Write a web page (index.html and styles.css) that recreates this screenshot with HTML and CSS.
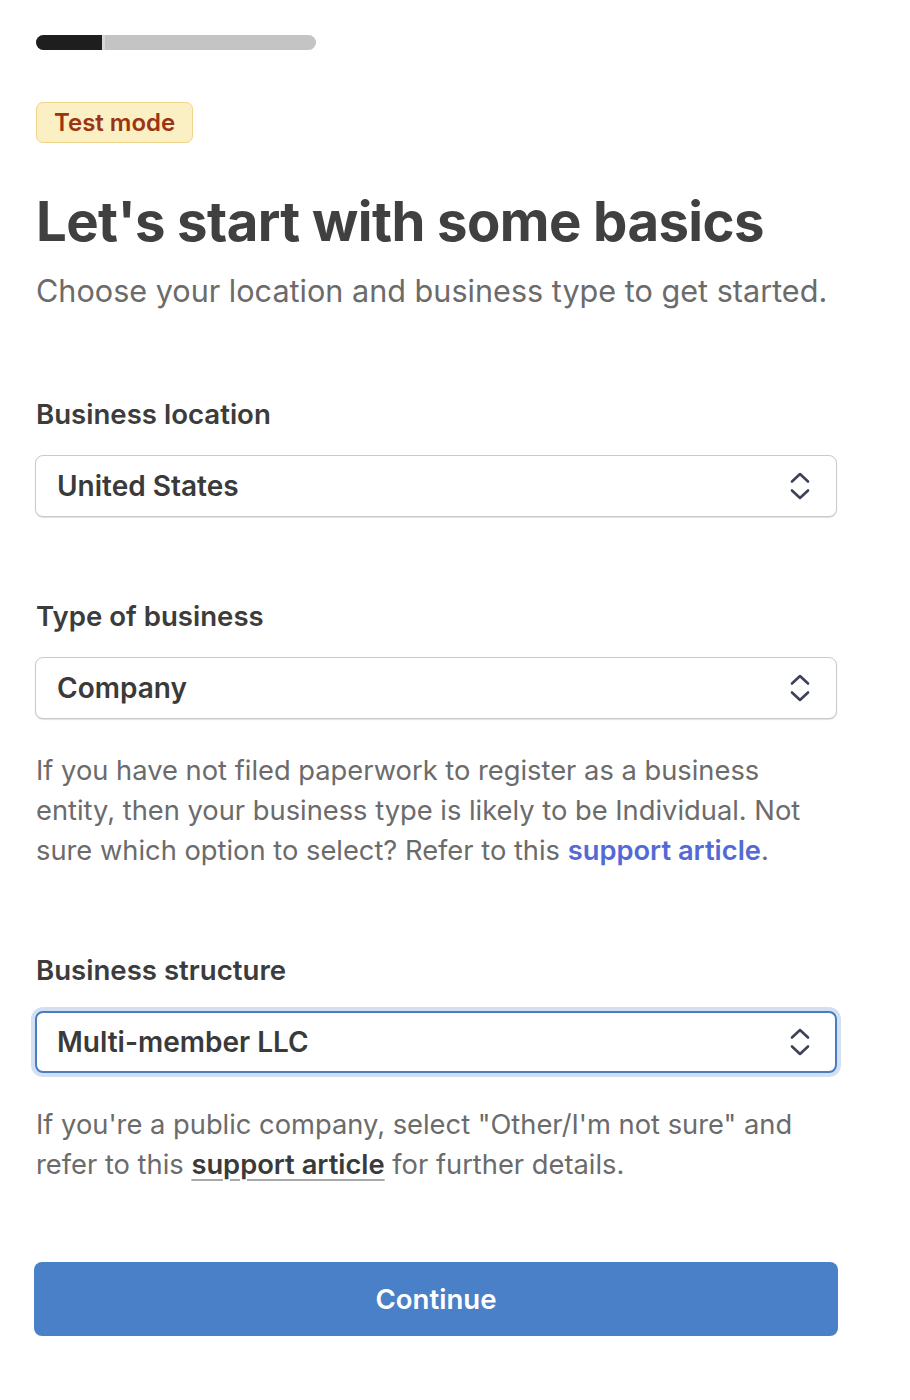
FILE: index.html
```html
<!DOCTYPE html>
<html lang="en">
<head>
<meta charset="utf-8">
<title>Let's start with some basics</title>
<link rel="stylesheet" href="styles.css">
</head>
<body>
<main class="page">
  <div class="progress"><div class="progress-fill"></div></div>

  <span class="badge">Test mode</span>

  <h1 class="title">Let's start with some basics</h1>
  <p class="subtitle">Choose your location and business type to get started.</p>

  <section class="field field-first">
    <label class="label">Business location</label>
    <div class="select">
      <span class="select-value">United States</span>
      <svg class="chevrons" width="24" height="32" viewBox="0 0 24 32" aria-hidden="true"><path d="M4 11.5 L12 4 L20 11.5 M4 20.5 L12 28 L20 20.5" fill="none" stroke="#3c4257" stroke-width="2.6" stroke-linecap="round" stroke-linejoin="round"/></svg>
    </div>
  </section>

  <section class="field">
    <label class="label">Type of business</label>
    <div class="select">
      <span class="select-value">Company</span>
      <svg class="chevrons" width="24" height="32" viewBox="0 0 24 32" aria-hidden="true"><path d="M4 11.5 L12 4 L20 11.5 M4 20.5 L12 28 L20 20.5" fill="none" stroke="#3c4257" stroke-width="2.6" stroke-linecap="round" stroke-linejoin="round"/></svg>
    </div>
    <p class="help">If you have not filed paperwork to register as a business entity, then your business type is likely to be Individual. Not sure which option to select? Refer to this <a class="link-blue" href="#">support article</a>.</p>
  </section>

  <section class="field field-struct">
    <label class="label">Business structure</label>
    <div class="select select-focus">
      <span class="select-value">Multi-member LLC</span>
      <svg class="chevrons" width="24" height="32" viewBox="0 0 24 32" aria-hidden="true"><path d="M4 11.5 L12 4 L20 11.5 M4 20.5 L12 28 L20 20.5" fill="none" stroke="#3c4257" stroke-width="2.6" stroke-linecap="round" stroke-linejoin="round"/></svg>
    </div>
    <p class="help">If you're a public company, select "Other/I'm not sure" and refer to this <a class="link-under" href="#">support article</a> for further details.</p>
  </section>

  <button class="continue" type="button">Continue</button>
</main>
</body>
</html>
```

FILE: styles.css
```css
* { box-sizing: border-box; }
html, body { margin: 0; padding: 0; background: #ffffff; }
body {
  font-family: Inter, "Noto Sans", "Liberation Sans", sans-serif;
  color: #3c3c3c;
}
.page {
  width: 910px;
  padding: 35px 0 0 35px;
}
.progress {
  margin-left: 1px;
  width: 280px;
  height: 15px;
  border-radius: 8px;
  background: #c4c4c4;
  overflow: hidden;
}
.progress-fill {
  height: 100%;
  background: #1e1e1e;
  border-right: 3px solid #d6d6d6;
  width: 69px;
}
.badge {
  display: inline-block;
  margin-top: 52px;
  margin-left: 1px;
  padding: 0 17px;
  height: 41px;
  line-height: 39px;
  font-size: 24px;
  font-weight: 600;
  color: #9a3412;
  background: #fbefc4;
  border: 1px solid #efd48a;
  border-radius: 7px;
}
.title {
  margin: 46px 0 0 1px;
  font-size: 54.5px;
  line-height: 64px;
  font-weight: 700;
  letter-spacing: -0.6px;
  color: #404040;
}
.subtitle {
  margin: 18px 0 0 1px;
  font-size: 30.6px;
  line-height: 40px;
  color: #6b6b6b;
}
.field { width: 802px; }
.field-first { margin-top: 86px; }
.field + .field { margin-top: 82px; }
.field-struct { margin-top: 82px !important; }
.label {
  display: block;
  margin-left: 1px;
  font-size: 27.6px;
  line-height: 34px;
  font-weight: 600;
  color: #3c3c3c;
}
.select {
  margin-top: 24px;
  height: 62px;
  display: flex;
  align-items: center;
  justify-content: space-between;
  padding: 0 24px 0 21px;
  border: 1px solid #c9c9cc;
  border-radius: 8px;
  background: #fff;
  box-shadow: 0 1px 1px rgba(0,0,0,0.12);
}
.select-value {
  font-size: 28px;
  font-weight: 600;
  color: #3a3a3a;
}
.chevrons { display: block; }
.select-focus {
  border: 2px solid #4a7cc4;
  padding: 0 23px 0 20px;
  box-shadow: 0 0 0 4px #d2e0f1;
}
.help {
  margin: 32px 0 0 1px;
  font-size: 27.3px;
  line-height: 40px;
  color: #6b6b6b;
  width: 800px;
}
.link-blue {
  color: #5469d4;
  font-weight: 600;
  text-decoration: none;
}
.link-under {
  color: #3a3a3a;
  font-weight: 600;
  text-decoration: underline;
  text-decoration-color: #a8a8a8;
  text-decoration-thickness: 2px;
  text-underline-offset: 5px;
}
.continue {
  display: block;
  margin-top: 77px;
  margin-left: -1px;
  width: 804px;
  height: 74px;
  border: none;
  border-radius: 8px;
  background: #4a80c8;
  color: #fff;
  font-family: inherit;
  font-size: 27.6px;
  font-weight: 600;
  cursor: pointer;
}
```
